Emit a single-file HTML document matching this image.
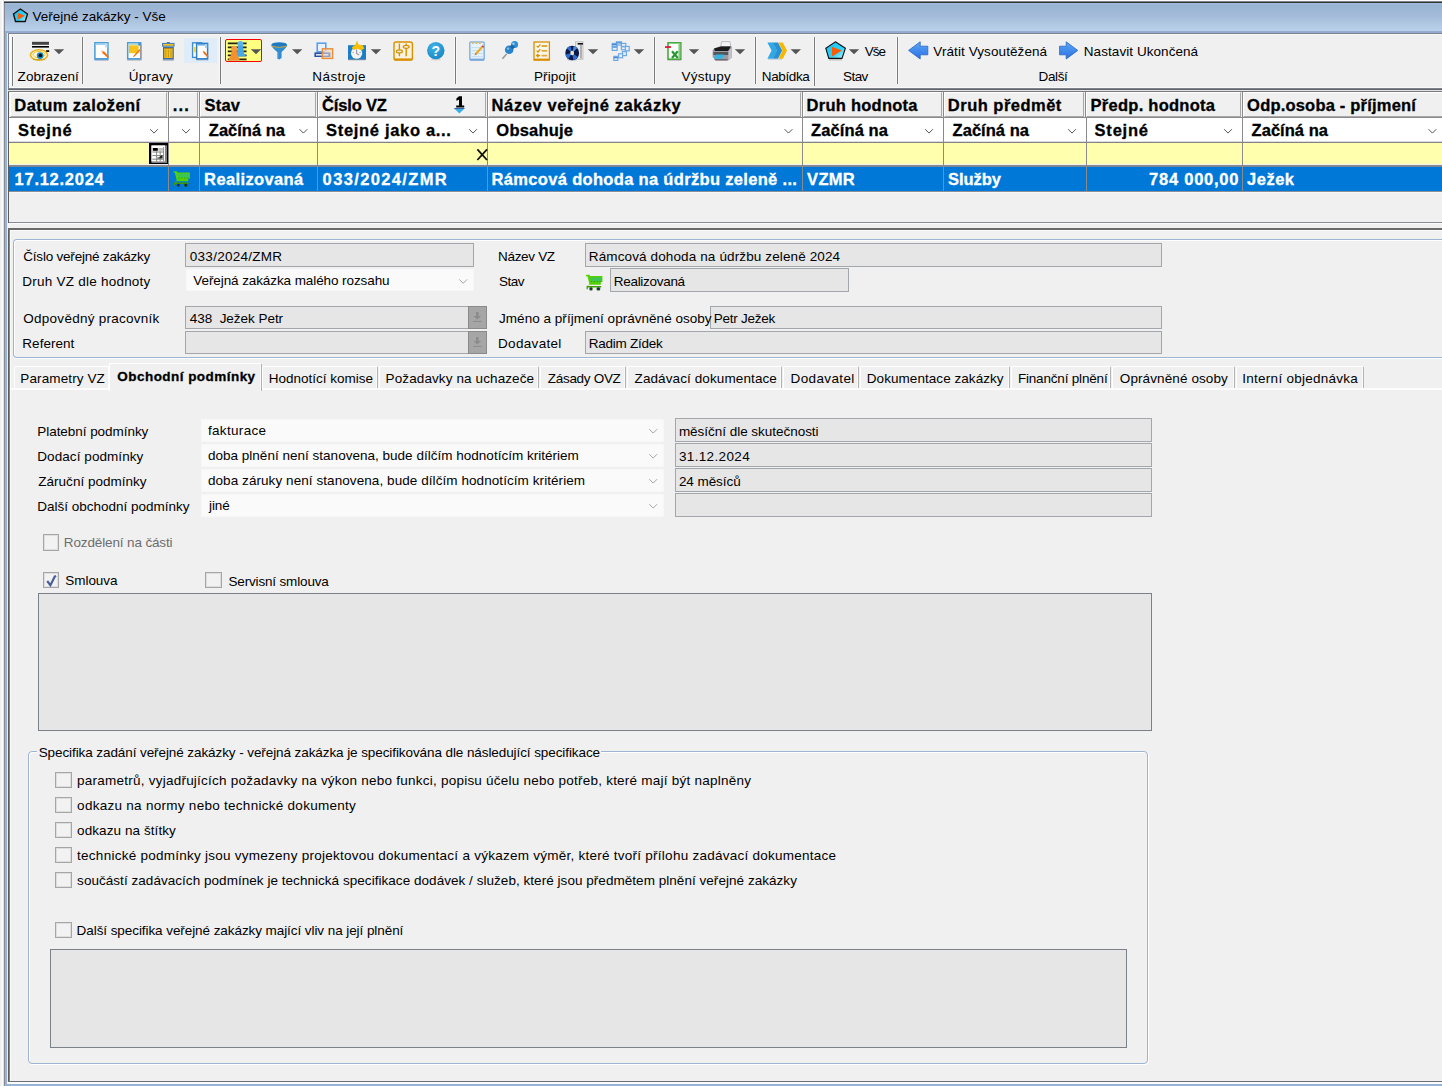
<!DOCTYPE html>
<html><head><meta charset="utf-8"><title>Veřejné zakázky - Vše</title>
<style>
html,body{margin:0;padding:0;overflow:hidden}
body{width:1442px;height:1086px;background:#f0f0f0;position:relative;overflow:hidden;font-family:"Liberation Sans",sans-serif;font-size:13px;color:#000}
.a{position:absolute;box-sizing:border-box}
.t{position:absolute;white-space:pre;line-height:20px;height:20px}
.vs{position:absolute;width:1px;background:#7a7a7a;top:37px;height:47px;box-shadow:-1px 0 0 #f8f8f8,1px 0 0 #f8f8f8}
.hd{position:absolute;top:92px;height:25px;box-sizing:border-box;background:#f0f0f0;border-left:1px solid #fff;border-top:1px solid #fff;border-right:1px solid #a8a8a8;border-bottom:1px solid #a8a8a8}
.gs{position:absolute;top:92px;height:100px;width:1px;background:#8a8a8a}
.fc{position:absolute;top:118px;height:24px;background:#fff}
.fld{position:absolute;box-sizing:border-box;background:#e6e6e6;border:1px solid #a3a6ab}
.cmb{position:absolute;box-sizing:border-box;background:#fafafa;border:1px solid #f7f7f7}
.cb{position:absolute;box-sizing:border-box;width:17px;height:16px;background:#f2f2f2;border:1px solid #a6a6a6;box-shadow:inset 0 0 0 1px #dedede}
.tab{position:absolute;top:366px;height:22px;box-sizing:border-box;background:#f0f0f0;border-left:1px solid #fff;border-top:1px solid #fff;border-right:1px solid #b4b4b4;box-shadow:inset -1px 0 0 #fafafa;border-radius:2px 2px 0 0}
svg{position:absolute;overflow:visible}
</style></head><body>

<!-- window frame -->
<div class="a" style="left:0;top:0;width:1442px;height:1px;background:#fafafa"></div>
<div class="a" style="left:1px;top:0;width:1px;height:1086px;background:#f5f5f5"></div>
<div class="a" style="left:2px;top:0;width:1px;height:1086px;background:#fcfcfc"></div>
<div class="a" style="left:3px;top:0;width:1px;height:1086px;background:#e0e0e0"></div>
<div class="a" style="left:4px;top:1px;width:1px;height:1085px;background:#868b95"></div>
<div class="a" style="left:5px;top:1px;width:2px;height:1085px;background:#98b4d4"></div>
<div class="a" style="left:7px;top:31px;width:1px;height:1053px;background:#ececec"></div>
<!-- title bar -->
<div class="a" style="left:4px;top:1px;width:1438px;height:1px;background:#7d828b"></div>
<div class="a" style="left:4px;top:2px;width:1438px;height:1px;background:#333"></div>
<div class="a" style="left:5px;top:3px;width:1437px;height:29px;background:linear-gradient(#a0bedd,#99b3d3 2px,#a4bcd9 45%,#bdd3ec)"></div>
<div class="a" style="left:5px;top:31px;width:1437px;height:2px;background:#93add0"></div>
<!-- inner frame -->
<div class="a" style="left:8px;top:33px;width:1434px;height:1px;background:#7d828c"></div>
<div class="a" style="left:8px;top:33px;width:1px;height:58px;background:#7d828c"></div>
<div class="a" style="left:8px;top:91px;width:1px;height:991px;background:#5c5c5c"></div>
<div class="a" style="left:9px;top:91px;width:1px;height:990px;background:#7d828b"></div>
<div class="a" style="left:9px;top:34px;width:2px;height:54px;background:#fafafa"></div>
<div class="a" style="left:10px;top:34px;width:1px;height:1047px;background:#fbfbfb"></div>
<div class="a" style="left:9px;top:34px;width:1433px;height:1px;background:#f7f7f7"></div>
<!-- bottom frame -->
<div class="a" style="left:8px;top:1081px;width:1434px;height:1px;background:#6c7077"></div>
<div class="a" style="left:7px;top:1082px;width:1435px;height:2px;background:#fbfbfb"></div>
<div class="a" style="left:5px;top:1084px;width:1437px;height:2px;background:#98b4d4"></div>

<!-- toolbar bottom -->
<div class="a" style="left:9px;top:87px;width:1433px;height:1px;background:#fafafa"></div>
<div class="a" style="left:8px;top:88px;width:1434px;height:1px;background:#7d828c"></div>
<div class="a" style="left:8px;top:89px;width:1434px;height:1px;background:#62666c"></div>
<div class="a" style="left:8px;top:90px;width:1434px;height:1px;background:#e4e4e4"></div>
<!-- toolbar separators -->
<div class="vs" style="left:12px;height:49px"></div>
<div class="vs" style="left:82px"></div>
<div class="vs" style="left:220px"></div>
<div class="vs" style="left:455px"></div>
<div class="vs" style="left:654px"></div>
<div class="vs" style="left:755px"></div>
<div class="vs" style="left:814px;height:49px"></div>
<div class="vs" style="left:897px"></div>
<!-- highlighted buttons -->
<div class="a" style="left:184px;top:38px;width:33px;height:25px;background:#e0edf9"></div>
<div class="a" style="left:225px;top:39px;width:37px;height:23px;background:#ffff80;border:1px solid #f00;border-radius:2px"></div>

<svg width="1442" height="1086" viewBox="0 0 1442 1086" style="left:0;top:0;z-index:5">
<defs>
<path id="dd" d="M0 0h10.4l-5.2 5z" fill="#555"/>
<g id="chev"><path d="M0.1 0.4l3.9 3.9 3.9-3.9" fill="none" stroke="#555" stroke-width="1"/></g>
<g id="chevl"><path d="M0.1 0.4l3.9 3.9 3.9-3.9" fill="none" stroke="#a4a4a4" stroke-width="1"/></g>
<g id="cart">
<path d="M0.3 0.8q0.2-1 1.3-1h2.3l0.9 1.2h12.2v6l-1.6 0.2v2.6h-11.2l-2.2-8.6h-1.6z" fill="#52d205"/>
<path d="M5 2.4h11.5v4h-11z" fill="#3cc455"/>
<path d="M5.6 6.6h10.4" stroke="#3a9a10" stroke-width="1" stroke-dasharray="1.2 1.6"/>
<path d="M4.2 9.4l-2.6 2v0.4" stroke="#52d205" stroke-width="1" fill="none" stroke-dasharray="1 0.8"/>
<path d="M1.2 11h14.6v1.6h-13.4v1.6h-1.2z" fill="#3f9a04"/>
<rect x="4" y="12.4" width="3.2" height="3" rx="1" fill="#2a5a10"/><rect x="4.9" y="12.6" width="1.5" height="2" fill="#0a2060"/>
<rect x="11.2" y="12.4" width="3.6" height="3" rx="1" fill="#2a5a10"/><rect x="12.1" y="12.6" width="1.8" height="2" fill="#0a2060"/>
</g>
<linearGradient id="gb" x1="0" y1="0" x2="0" y2="1"><stop offset="0" stop-color="#5aa8f8"/><stop offset="1" stop-color="#2a6fe0"/></linearGradient>
<radialGradient id="gh" cx="0.4" cy="0.3" r="0.8"><stop offset="0" stop-color="#3fb4e8"/><stop offset="1" stop-color="#1583c4"/></radialGradient>
<linearGradient id="gp" x1="0" y1="0" x2="1" y2="1"><stop offset="0" stop-color="#10c0f8"/><stop offset="0.6" stop-color="#30d0f8"/><stop offset="1" stop-color="#c8f4fc"/></linearGradient>
</defs>

<!-- title icon pentagon -->
<g transform="translate(13.2,8.7) scale(0.73)">
<path d="M9.8 0.4L19.6 7.2 16.4 17.6H3.2L0.4 7.2z" fill="url(#gp)" stroke="#111" stroke-width="1.9"/>
<path d="M6.2 5.6v9.6l9.6-5.6z" fill="#ff5a00"/>
</g>

<!-- 1 eye/view -->
<rect x="32" y="41.8" width="17" height="3" fill="#444"/><rect x="32" y="46" width="17" height="1.6" fill="#000"/>
<rect x="46" y="50.2" width="3.2" height="1.8" fill="#111"/>
<ellipse cx="39" cy="55" rx="8.6" ry="5.2" fill="#fff6d8" stroke="#e8b418" stroke-width="1.6"/>
<ellipse cx="39" cy="54.6" rx="6" ry="3.2" fill="none" stroke="#f0c840" stroke-width="1"/>
<circle cx="40.2" cy="55.6" r="3.4" fill="#1a90c8"/><circle cx="40.4" cy="55.4" r="1.9" fill="#061018"/>
<path d="M33 59.6h12" stroke="#c8a030" stroke-width="1"/>
<use href="#dd" x="53.8" y="49.2"/>

<!-- 2 new doc -->
<rect x="94.4" y="59" width="14" height="1.6" fill="#8ea6c8"/>
<rect x="94.9" y="42.8" width="13" height="16" fill="#fff" stroke="#469bd8" stroke-width="1.5"/>
<rect x="95.6" y="43.4" width="11.6" height="1.6" fill="#9fd0f0"/><rect x="105" y="43.4" width="2.4" height="4" fill="#bfe0f6"/>
<path d="M101.4 50.4l1.2 2.8 5.6 5 0.6-1.6-4.6-5z" fill="#f07018"/><path d="M101.2 50.2l2.6 1-1.4 1.4z" fill="#f8c070"/>

<!-- 3 edit doc -->
<rect x="127.2" y="59" width="14.4" height="1.6" fill="#aab4c4"/>
<rect x="127.7" y="42.8" width="13" height="16" fill="#fff" stroke="#469bd8" stroke-width="1.5"/>
<rect x="140" y="44.4" width="1.6" height="14.4" fill="#9a9a9a"/>
<rect x="128.6" y="43.6" width="10" height="1.6" fill="#b4d8c4"/><rect x="138.2" y="43.2" width="2.2" height="2.4" fill="#2a90e0"/>
<rect x="129" y="45.4" width="9.6" height="7.8" fill="#f8c21c"/>
<path d="M139.4 49l-5.6 6.4-1 1.6 1.8-0.4 5.6-6z" fill="#f07018"/>

<!-- 4 trash -->
<rect x="162.8" y="59" width="11" height="1.6" fill="#98a4b8"/>
<rect x="166.8" y="42" width="3" height="1.6" fill="#3a78b8"/>
<rect x="162.6" y="43.4" width="11.4" height="2.8" fill="#f8c21c" stroke="#3a78b8" stroke-width="1"/>
<rect x="163.6" y="47.6" width="9.6" height="11" fill="#f8c21c" stroke="#3a6ea8" stroke-width="1.2"/>
<path d="M165.8 49.6v8M168.4 49.6v8M171 49.6v8" stroke="#d09c10" stroke-width="1.2"/>
<path d="M164 48.4h9" stroke="#b08820" stroke-width="1"/>

<!-- 5 copy doc -->
<rect x="192.6" y="42.8" width="9" height="14.6" fill="#fff" stroke="#3f8fd0" stroke-width="1.4"/>
<rect x="193.8" y="47" width="1.8" height="5.4" fill="#f8d040"/>
<rect x="196.2" y="59" width="12" height="1.4" fill="#9ab0cc"/>
<rect x="196.6" y="43.4" width="11" height="15.4" fill="#fff" stroke="#2f80c8" stroke-width="1.5"/>
<rect x="197.4" y="44" width="9.6" height="1.6" fill="#6ab0e8"/><rect x="205" y="44" width="2.2" height="4" fill="#a8d4f4"/>
<path d="M202.6 50.8l1.2 2.6 4 4.4 0.8-1.6-3.6-4.4z" fill="#f07018"/>

<!-- 6 people on yellow -->
<path d="M227.8 43.4h18.8M227.8 47.4h18.8M227.8 51.4h18.8M227.8 55.4h18.8M227.8 59.4h18.8" stroke="#26260a" stroke-width="1.9"/>
<circle cx="240.4" cy="44" r="3" fill="#5cb6ec"/><path d="M238 45.6h4.8l1.2 7.8 1.6 1.4v1.6h-10.4v-1.6l1.6-1.4z" fill="#48a8e4"/>
<circle cx="234.2" cy="48.8" r="3" fill="#f89a3c"/><path d="M231.8 50.4h4.8l1.4 6.4 1.6 1.4v2h-10.8v-2l1.6-1.4z" fill="#f59030"/>
<use href="#dd" x="250.8" y="49.2"/>

<!-- 7 funnel -->
<path d="M271.2 45.2q0-3 8-3t8 3q0 1.6-5.6 6.8v6l-2.4 1.6-2-1v-6.6q-6-5.2-6-6.8z" fill="#2f8ed0"/>
<ellipse cx="279.2" cy="44.6" rx="7.2" ry="1.8" fill="#1f78c0"/>
<path d="M271.8 46.4q7.4 2 14.8 0" stroke="#c8a040" stroke-width="1" fill="none"/>
<path d="M277.6 52v6.6" stroke="#6ab8ec" stroke-width="1.2"/>
<use href="#dd" x="292" y="49.2"/>

<!-- 8 windows -->
<rect x="317.2" y="43.2" width="8.6" height="8.6" fill="#e8f0fc" stroke="#5aa0ec" stroke-width="1.6"/>
<rect x="314.4" y="52.4" width="16" height="4.6" fill="#2850a8"/><rect x="316" y="54" width="12.4" height="1.6" fill="#dfe8f8"/>
<rect x="322.4" y="48.8" width="10.2" height="9.6" fill="#f0e0d0" fill-opacity="0.55" stroke="#e89040" stroke-width="1.5"/>
<rect x="324.6" y="50.8" width="6" height="1.4" fill="#f4d8b8"/>

<!-- 9 clock star -->
<rect x="348" y="45.2" width="18" height="14.6" fill="#1a7fc8"/><rect x="348" y="59" width="17" height="1.2" fill="#6a8aa8"/>
<circle cx="356.6" cy="53.2" r="5.6" fill="#f4f4f4"/><path d="M356.6 49.6v3.8l2.6 1.6" stroke="#99a" stroke-width="1.2" fill="none"/><path d="M352.6 52.4h1.4M359.4 52.4h1.4" stroke="#aab" stroke-width="1"/>
<path d="M357.2 40.6l1.2 4 4.2 0.6 1.8 3.4-3.2 1.6-3.6-1.4-4.4 1.2-1.4-2.6 3.2-2.4z" fill="#f8c000"/>
<use href="#dd" x="370.8" y="49.2"/>

<!-- 10 sliders -->
<rect x="394" y="42" width="18.4" height="18" rx="2" fill="#fbf3e0" stroke="#d89000" stroke-width="1.4"/>
<path d="M394 59.4h18.4" stroke="#d89000" stroke-width="2"/>
<path d="M399.4 43.6v12.6M406.2 43.6v12.6" stroke="#d89000" stroke-width="1.4"/>
<ellipse cx="399.4" cy="51.4" rx="3" ry="1.5" fill="#fdf3dc" stroke="#d89000" stroke-width="1.2"/>
<ellipse cx="406.2" cy="46.8" rx="3" ry="1.5" fill="#fdf3dc" stroke="#d89000" stroke-width="1.2"/>

<!-- 11 help -->
<ellipse cx="435.8" cy="59.6" rx="5" ry="0.9" fill="#d0d0d0"/>
<circle cx="435.8" cy="50.6" r="8.7" fill="url(#gh)"/>
<text x="435.9" y="55.6" font-family="Liberation Sans" font-weight="bold" font-size="14" fill="#fff" text-anchor="middle">?</text>

<!-- 12 note -->
<rect x="469.8" y="42" width="14.4" height="18" rx="1" fill="#e6f2fc" stroke="#86b4e0" stroke-width="1.5"/>
<rect x="470" y="58.6" width="14" height="2" fill="#78a8d8"/>
<path d="M472 43h10" stroke="#d8c070" stroke-width="2" stroke-dasharray="2 1.4"/>
<path d="M471.6 47.6h11M471.6 50.6h11M471.6 53.6h11M471.6 56.6h11" stroke="#c4dcf2" stroke-width="1"/>
<path d="M483 47.6l-1.6-1.4-6 6.6-0.8 2.4 2.4-1z" fill="#f4a818"/><path d="M483.2 47.8l-1.8-1.6 1-1 1.8 1.6z" fill="#d83820"/><path d="M474.6 55.2l0.8-2.4 1.6 1.4z" fill="#888"/>

<!-- 13 pin -->
<path d="M506.6 54l-4.2 4.8" stroke="#9a9a9a" stroke-width="1.6"/>
<circle cx="509.2" cy="49.8" r="4.3" fill="#2a84cc"/><circle cx="514.6" cy="44.6" r="3.5" fill="#2f8ed4"/>
<path d="M509.6 46.6l2.4-2.4 3 3-2.4 2.4z" fill="#1c66a8"/>
<circle cx="513.4" cy="43.8" r="1.3" fill="#8accf4"/><circle cx="508" cy="48.6" r="1.2" fill="#7cc0ee"/>

<!-- 14 checklist -->
<rect x="534" y="42" width="15.4" height="18" fill="#fbf6ea" stroke="#d89000" stroke-width="1.3"/>
<path d="M534 59.6h15.4" stroke="#d89000" stroke-width="2"/>
<path d="M541.6 46h5.6M541.6 50.8h5.6M541.6 55.6h5.6" stroke="#e0aa40" stroke-width="1.8"/>
<path d="M536.6 45.8l1.4 1.4 2.4-2.8M536.6 50.6l1.4 1.4 2.4-2.8" stroke="#d89000" stroke-width="1.2" fill="none"/>
<path d="M540.2 55.6h-3.4M538.4 54l-1.8 1.6 1.8 1.6" stroke="#d89000" stroke-width="1.2" fill="none"/>

<!-- 15 CD + drive -->
<rect x="575.6" y="41.8" width="7.4" height="17.4" fill="#e8e8e8" stroke="#b8b8b8" stroke-width="0.8"/>
<rect x="577.6" y="43" width="5.4" height="1.6" fill="#111"/><rect x="580" y="45" width="2" height="13.6" fill="#b0b0b0"/>
<ellipse cx="572.2" cy="59.8" rx="5" ry="0.9" fill="#b8c0d0"/>
<ellipse cx="572.2" cy="53" rx="6.9" ry="7.3" fill="#0c1848"/>
<path d="M572.2 53l-5.4-4.4a7 7 0 0 1 3.6-2.6zM572.2 53l5.6 4a7 7 0 0 1-4.4 3zM572.2 53l-6.6 1.6a7 7 0 0 0 2.6 4.4z" fill="#2a6fd0"/>
<path d="M572.2 53l1.6-7a7 7 0 0 1 3.6 2z" fill="#4a8ae0"/>
<ellipse cx="572.2" cy="53" rx="1.9" ry="2.2" fill="#ece4c4"/>
<use href="#dd" x="587.8" y="49.2"/>

<!-- 16 flow -->
<g fill="#e6f0fb" stroke="#6ea8e6" stroke-width="1.2">
<rect x="612.2" y="43.4" width="5" height="3"/><rect x="612.2" y="47.4" width="5" height="3"/>
<rect x="616.4" y="41.8" width="5" height="3.2"/>
<rect x="621.4" y="43.4" width="4.4" height="3"/><rect x="621.4" y="46.8" width="4.4" height="3"/>
<rect x="625.4" y="46.4" width="3.8" height="4.4"/>
<rect x="622.4" y="51.6" width="4" height="4"/>
<rect x="618.6" y="53.8" width="4" height="4"/>
<rect x="613.8" y="56.4" width="4" height="4"/>
</g>
<path d="M612.2 44.6h5M616.4 42.8h5M613.8 57.6h4" stroke="#4a86d0" stroke-width="1.2"/>
<use href="#dd" x="633.8" y="49.2"/>

<!-- 17 excel -->
<rect x="667.6" y="59.2" width="13.6" height="1.4" fill="#b0b4b0"/>
<rect x="668" y="42.8" width="12.8" height="16.4" fill="#fff" stroke="#4aa840" stroke-width="1.6"/>
<rect x="678.4" y="43.4" width="2" height="15" fill="#8cc888"/>
<rect x="665" y="46.2" width="6" height="1.7" fill="#e01030"/>
<path d="M672 51.2l5.8 6.8M677.8 51.2l-5.8 6.8" stroke="#279a30" stroke-width="2.2"/>
<use href="#dd" x="688.8" y="49.2"/>

<!-- 18 printer -->
<path d="M721.6 41.6h8.4l1 6h-10.4z" fill="#f4f4f4" stroke="#b0b0b8" stroke-width="0.8"/>
<path d="M714 48.4l7-2.4h10l0.8 1.6v10l-3.2 2.6h-13l-3-3.2v-6.4z" fill="#9c9ca4"/>
<path d="M714 48.6l7-2.2h9.8l-2.6 4.6h-13.4z" fill="#1c1c1c"/>
<path d="M728.4 51l3.2-3v9.6l-3.2 2.6z" fill="#c4c4c8"/>
<path d="M713.4 52h14.8v3h-14.8z" fill="#55555c"/>
<path d="M716 54.4h8.4l-2.4 4.4h-8.2z" fill="#30b4e4"/>
<path d="M714 59.2h13.6v1.4h-12z" fill="#5c5c64"/>
<use href="#dd" x="734.8" y="49.2"/>

<!-- 19 chevrons -->
<path d="M767.4 42.4h5.6l4.2 8.2-4.2 8.2h-5.6l4.2-8.2z" fill="#30a8e4"/>
<path d="M772.8 42.4h5.2l4.2 8.2-4.2 8.2h-5.2l4.2-8.2z" fill="#2890d4"/>
<path d="M778.4 42.4h4.4l4.2 8.2-4.2 8.2h-4.4l4.2-8.2z" fill="#f8b800"/>
<path d="M768 59.4h14" stroke="#c8d0dc" stroke-width="1"/>
<use href="#dd" x="790.6" y="49.2"/>

<!-- 20 pentagon -->
<path d="M829 59.8h13" stroke="#b8b8b8" stroke-width="1.2"/>
<path d="M835.4 41.8L845.4 48.2 842 58.4H828.8L825.8 48.2z" fill="url(#gp)" stroke="#111" stroke-width="1.1"/>
<path d="M832 46.8v9.6l9.8-5.8z" fill="#ff5a00"/>
<use href="#dd" x="848.8" y="49.2"/>

<!-- 21 arrows -->
<path d="M908.6 50.4l11.6-8.6v4.4h7.6v8.6h-7.6v4.2z" fill="url(#gb)" stroke="#2a64c8" stroke-width="0.8"/>
<path d="M1077.8 50.4l-11.6-8.6v4.4h-6.6v8.6h6.6v4.2z" fill="url(#gb)" stroke="#2a64c8" stroke-width="0.8"/>

<!-- grid icons -->
<use href="#chev" x="150" y="128.8"/><use href="#chev" x="182" y="128.8"/><use href="#chev" x="299.4" y="128.8"/>
<use href="#chev" x="469" y="128.8"/><use href="#chev" x="784.5" y="128.8"/><use href="#chev" x="925" y="128.8"/>
<use href="#chev" x="1068" y="128.8"/><use href="#chev" x="1224" y="128.8"/><use href="#chev" x="1428.4" y="128.8"/>
<!-- sort indicator -->
<path d="M459 96.2h3v9.2h2.2v2.2h-8v-2.2h2.8v-5.6l-2.6 1v-2.2z" fill="#000"/>
<path d="M454 108.2h10.8l-5.4 5.4z" fill="#3aace8"/><path d="M454 108.2h10.8l-0.8 0.9h-8l-1 0.2z" fill="#1a4a90"/>
<!-- calendar -->
<rect x="149" y="143" width="19" height="21" fill="#000"/>
<rect x="151.4" y="145.4" width="15.6" height="17.6" fill="#808080"/>
<rect x="151.4" y="145.4" width="13.6" height="16" fill="#fff"/>
<rect x="152.8" y="148" width="5" height="2.8" fill="#000"/><rect x="158.4" y="148" width="4.6" height="2.8" fill="#c0c0c0"/>
<path d="M152.4 152h11.4M152.4 155.6h11.4M152.4 159.2h11.4" stroke="#808080" stroke-width="1"/>
<path d="M156.6 151.4v10M160.2 151.4v10M163.6 147v14.4" stroke="#808080" stroke-width="0.9"/>
<path d="M157.4 157.6l2-0.2 1.4-2 1.8 0.2v3h-5.2z" fill="#222"/>
<!-- X -->
<path d="M477.4 149.4l9.6 10.6M487 149.4l-9.6 10.6" stroke="#111" stroke-width="1.8"/>
<!-- carts -->
<use href="#cart" x="172.8" y="171.4"/>
<use href="#cart" x="585.4" y="275"/>
<!-- combo chevrons -->
<use href="#chevl" x="459.2" y="279"/>
<use href="#chevl" x="649.2" y="428.8"/><use href="#chevl" x="649.2" y="453.8"/><use href="#chevl" x="649.2" y="478.8"/><use href="#chevl" x="649.2" y="503.8"/>
<!-- lookup arrow buttons -->
<g id="lk"><path d="M476 312h2.6v4h2.6l-3.9 3.6-3.9-3.6h2.6z" fill="#8c8c8c"/><path d="M473 321.4h8.6" stroke="#8c8c8c" stroke-width="1"/></g>
<use href="#lk" y="25"/>
<!-- check -->
<path d="M47.2 581l3.2 4.2 4.4-8.6 1.2-0.8" fill="none" stroke="#4a5f9a" stroke-width="2.2"/>
</svg>


<!-- grid -->
<div class="a" style="left:8px;top:91px;width:1434px;height:1px;background:#7a7a7a"></div>
<div class="a" style="left:9px;top:92px;width:1433px;height:130px;background:#f0f0f0"></div>
<div class="hd" style="left:10px;width:157px"></div>
<div class="hd" style="left:169px;width:29px"></div>
<div class="hd" style="left:200px;width:116px"></div>
<div class="hd" style="left:318px;width:168px"></div>
<div class="hd" style="left:488px;width:313px"></div>
<div class="hd" style="left:803px;width:139px"></div>
<div class="hd" style="left:944px;width:140px"></div>
<div class="hd" style="left:1086px;width:155px"></div>
<div class="hd" style="left:1243px;width:199px;border-right:0"></div>
<!-- filter row -->
<div class="a" style="left:9px;top:117px;width:1433px;height:1px;background:#8a8a8a"></div>
<div class="a" style="left:9px;top:118px;width:1433px;height:24px;background:#fff"></div>
<div class="a" style="left:9px;top:141px;width:1433px;height:1px;background:#dcdcde"></div>
<div class="a" style="left:9px;top:142px;width:1433px;height:1px;background:#828389"></div>
<!-- yellow row -->
<div class="a" style="left:9px;top:143px;width:1433px;height:21px;background:#ffffae"></div>
<div class="a" style="left:9px;top:164px;width:1433px;height:1px;background:#f3f3ee"></div>
<div class="a" style="left:9px;top:165px;width:1433px;height:1px;background:#8a8a90"></div>
<div class="a" style="left:9px;top:166px;width:1433px;height:1px;background:#7a8796"></div>
<!-- selected row -->
<div class="a" style="left:9px;top:167px;width:1433px;height:24px;background:#0078d7"></div>
<div class="a" style="left:9px;top:191px;width:1433px;height:1px;background:#8c9096"></div>
<div class="a" style="left:9px;top:192px;width:1433px;height:1px;background:#f8f8f8"></div>
<!-- col separators -->
<div class="gs" style="left:168px"></div>
<div class="gs" style="left:199px"></div>
<div class="gs" style="left:317px"></div>
<div class="gs" style="left:487px"></div>
<div class="gs" style="left:802px"></div>
<div class="gs" style="left:943px"></div>
<div class="gs" style="left:1085px;height:25px"></div><div class="gs" style="left:1086px;top:117px;height:74px"></div>
<div class="gs" style="left:1242px"></div>
<!-- grid bottom -->
<div class="a" style="left:9px;top:222px;width:1433px;height:1px;background:#858a94"></div>
<div class="a" style="left:9px;top:223px;width:1433px;height:1px;background:#fbfbfb"></div>
<!-- splitter / panel top -->
<div class="a" style="left:8px;top:223px;width:3px;height:5px;background:#f4f4f4"></div>
<div class="a" style="left:8px;top:228px;width:1434px;height:2px;background:#6a6a6a"></div>
<div class="a" style="left:10px;top:230px;width:1432px;height:1px;background:#fbfbfb"></div>

<!-- header group box -->
<div class="a" style="left:13px;top:239px;width:1429px;height:119px;border:1px solid #9db5d3;border-right:0;border-radius:4px 0 0 4px;box-shadow:inset 1px 1px 0 #fff, 0 1px 0 #fff"></div>
<div class="fld" style="left:185px;top:243px;width:289px;height:24px"></div>
<div class="cmb" style="left:186px;top:269px;width:288px;height:22px"></div>
<div class="fld" style="left:185px;top:306px;width:284px;height:23px"></div>
<div class="fld" style="left:185px;top:331px;width:284px;height:23px"></div>
<div class="a" style="left:468px;top:306px;width:19px;height:23px;background:#a6a6a6;border:1px solid #8a8a8a"></div>
<div class="a" style="left:468px;top:331px;width:19px;height:23px;background:#a6a6a6;border:1px solid #8a8a8a"></div>
<div class="fld" style="left:585px;top:243px;width:577px;height:24px"></div>
<div class="fld" style="left:610px;top:268px;width:239px;height:24px"></div>
<div class="fld" style="left:710px;top:306px;width:452px;height:23px"></div>
<div class="fld" style="left:585px;top:331px;width:577px;height:23px"></div>

<!-- tabs -->
<div class="a" style="left:10px;top:388px;width:1432px;height:2px;background:#fdfdfd"></div>
<div class="tab" style="left:14px;width:95px;border-right:1px solid #fff;box-shadow:none"></div>
<div class="tab" style="left:262px;width:116px"></div>
<div class="tab" style="left:379px;width:160px"></div>
<div class="tab" style="left:540px;width:86px"></div>
<div class="tab" style="left:627px;width:155px"></div>
<div class="tab" style="left:783px;width:76px"></div>
<div class="tab" style="left:860px;width:150px"></div>
<div class="tab" style="left:1011px;width:100px"></div>
<div class="tab" style="left:1112px;width:123px"></div>
<div class="tab" style="left:1236px;width:128px"></div>
<div class="tab" style="left:109px;top:363px;width:153px;height:28px;background:#f0f0f0;border-right:1px solid #b0b0b0;box-shadow:inset -1px 0 0 #fafafa"></div>

<!-- tab content -->
<div class="cmb" style="left:201px;top:419px;width:463px;height:23px"></div>
<div class="cmb" style="left:201px;top:444px;width:463px;height:23px"></div>
<div class="cmb" style="left:201px;top:469px;width:463px;height:23px"></div>
<div class="cmb" style="left:201px;top:494px;width:463px;height:23px"></div>
<div class="fld" style="left:675px;top:418px;width:477px;height:24px"></div>
<div class="fld" style="left:675px;top:443px;width:477px;height:24px"></div>
<div class="fld" style="left:675px;top:468px;width:477px;height:24px"></div>
<div class="fld" style="left:675px;top:493px;width:477px;height:24px"></div>
<div class="cb" style="left:43px;top:534px;width:16px;height:17px"></div>
<div class="cb" style="left:43px;top:572px;width:16px"></div>
<div class="cb" style="left:205px;top:572px"></div>
<div class="fld" style="left:38px;top:593px;width:1114px;height:138px;border-color:#7c8088"></div>

<!-- spec group -->
<div class="a" style="left:28px;top:751px;width:1120px;height:313px;border:1px solid #9db5d3;border-radius:4px;box-shadow:inset 1px 1px 0 #fff, 1px 1px 0 #fff"></div>
<div class="a" style="left:37px;top:747px;width:564px;height:10px;background:#f0f0f0"></div>
<div class="cb" style="left:55px;top:772px"></div>
<div class="cb" style="left:55px;top:797px"></div>
<div class="cb" style="left:55px;top:822px"></div>
<div class="cb" style="left:55px;top:847px"></div>
<div class="cb" style="left:55px;top:872px"></div>
<div class="cb" style="left:55px;top:922px"></div>
<div class="fld" style="left:50px;top:949px;width:1077px;height:99px;border-color:#7c8088"></div>

<span class="t" style="left:32.60px;top:7.00px;font-size:13.5px;letter-spacing:-0.023px;">Veřejné zakázky - Vše</span>
<span class="t" style="left:17.60px;top:67.00px;font-size:13.5px;letter-spacing:0.046px;">Zobrazení</span>
<span class="t" style="left:128.70px;top:67.00px;font-size:13.5px;letter-spacing:0.278px;">Úpravy</span>
<span class="t" style="left:312.30px;top:67.00px;font-size:13.5px;letter-spacing:0.420px;">Nástroje</span>
<span class="t" style="left:534.05px;top:67.00px;font-size:13.5px;letter-spacing:0.062px;">Připojit</span>
<span class="t" style="left:681.55px;top:67.00px;font-size:13.5px;letter-spacing:0.196px;">Výstupy</span>
<span class="t" style="left:761.80px;top:67.00px;font-size:13.5px;letter-spacing:-0.371px;">Nabídka</span>
<span class="t" style="left:843.05px;top:67.00px;font-size:13.5px;letter-spacing:-0.571px;">Stav</span>
<span class="t" style="left:1038.55px;top:67.00px;font-size:13.5px;letter-spacing:-0.364px;">Další</span>
<span class="t" style="left:864.70px;top:42.00px;font-size:13.5px;letter-spacing:-0.927px;">Vše</span>
<span class="t" style="left:933.30px;top:42.00px;font-size:13.5px;letter-spacing:0.088px;">Vrátit Vysoutěžená</span>
<span class="t" style="left:1083.80px;top:42.00px;font-size:13.5px;letter-spacing:0.063px;">Nastavit Ukončená</span>
<span class="t" style="left:14.30px;top:95.00px;font-size:16.5px;letter-spacing:0.441px;font-weight:bold;-webkit-text-stroke:0.3px;">Datum založení</span>
<span class="t" style="left:172.85px;top:95.00px;font-size:16.5px;letter-spacing:1.141px;font-weight:bold;-webkit-text-stroke:0.3px;">...</span>
<span class="t" style="left:204.60px;top:95.00px;font-size:16.5px;letter-spacing:0.174px;font-weight:bold;-webkit-text-stroke:0.3px;">Stav</span>
<span class="t" style="left:322.10px;top:95.00px;font-size:16.5px;letter-spacing:-0.176px;font-weight:bold;-webkit-text-stroke:0.3px;">Číslo VZ</span>
<span class="t" style="left:491.60px;top:95.00px;font-size:16.5px;letter-spacing:0.604px;font-weight:bold;-webkit-text-stroke:0.3px;">Název veřejné zakázky</span>
<span class="t" style="left:806.60px;top:95.00px;font-size:16.5px;letter-spacing:0.248px;font-weight:bold;-webkit-text-stroke:0.3px;">Druh hodnota</span>
<span class="t" style="left:947.85px;top:95.00px;font-size:16.5px;letter-spacing:0.479px;font-weight:bold;-webkit-text-stroke:0.3px;">Druh předmět</span>
<span class="t" style="left:1090.60px;top:95.00px;font-size:16.5px;letter-spacing:0.260px;font-weight:bold;-webkit-text-stroke:0.3px;">Předp. hodnota</span>
<span class="t" style="left:1247.10px;top:95.00px;font-size:16.5px;letter-spacing:0.199px;font-weight:bold;-webkit-text-stroke:0.3px;">Odp.osoba - příjmení</span>
<span class="t" style="left:18.10px;top:120.00px;font-size:16.5px;letter-spacing:0.822px;font-weight:bold;-webkit-text-stroke:0.3px;">Stejné</span>
<span class="t" style="left:208.85px;top:120.00px;font-size:16.5px;letter-spacing:0.002px;font-weight:bold;-webkit-text-stroke:0.3px;">Začíná na</span>
<span class="t" style="left:326.10px;top:120.00px;font-size:16.5px;letter-spacing:0.677px;font-weight:bold;-webkit-text-stroke:0.3px;">Stejné jako a...</span>
<span class="t" style="left:496.35px;top:120.00px;font-size:16.5px;letter-spacing:0.206px;font-weight:bold;-webkit-text-stroke:0.3px;">Obsahuje</span>
<span class="t" style="left:811.10px;top:120.00px;font-size:16.5px;letter-spacing:0.096px;font-weight:bold;-webkit-text-stroke:0.3px;">Začíná na</span>
<span class="t" style="left:952.60px;top:120.00px;font-size:16.5px;letter-spacing:0.033px;font-weight:bold;-webkit-text-stroke:0.3px;">Začíná na</span>
<span class="t" style="left:1094.60px;top:120.00px;font-size:16.5px;letter-spacing:0.772px;font-weight:bold;-webkit-text-stroke:0.3px;">Stejné</span>
<span class="t" style="left:1251.60px;top:120.00px;font-size:16.5px;letter-spacing:0.033px;font-weight:bold;-webkit-text-stroke:0.3px;">Začíná na</span>
<span class="t" style="left:14.60px;top:169.00px;font-size:16.5px;letter-spacing:0.727px;font-weight:bold;-webkit-text-stroke:0.3px;color:#fff;">17.12.2024</span>
<span class="t" style="left:204.10px;top:169.00px;font-size:16.5px;letter-spacing:0.375px;font-weight:bold;-webkit-text-stroke:0.3px;color:#fff;">Realizovaná</span>
<span class="t" style="left:322.60px;top:169.00px;font-size:16.5px;letter-spacing:1.361px;font-weight:bold;-webkit-text-stroke:0.3px;color:#fff;">033/2024/ZMR</span>
<span class="t" style="left:491.60px;top:169.00px;font-size:16.5px;letter-spacing:0.323px;font-weight:bold;-webkit-text-stroke:0.3px;color:#fff;">Rámcová dohoda na údržbu zeleně ...</span>
<span class="t" style="left:807.10px;top:169.00px;font-size:16.5px;letter-spacing:0.290px;font-weight:bold;-webkit-text-stroke:0.3px;color:#fff;">VZMR</span>
<span class="t" style="left:948.10px;top:169.00px;font-size:16.5px;letter-spacing:-0.059px;font-weight:bold;-webkit-text-stroke:0.3px;color:#fff;">Služby</span>
<span class="t" style="left:1149.10px;top:169.00px;font-size:16.5px;letter-spacing:0.755px;font-weight:bold;-webkit-text-stroke:0.3px;color:#fff;">784 000,00</span>
<span class="t" style="left:1247.10px;top:169.00px;font-size:16.5px;letter-spacing:0.480px;font-weight:bold;-webkit-text-stroke:0.3px;color:#fff;">Ježek</span>
<span class="t" style="left:23.30px;top:247.00px;font-size:13.5px;letter-spacing:-0.213px;">Číslo veřejné zakázky</span>
<span class="t" style="left:22.30px;top:272.00px;font-size:13.5px;letter-spacing:0.235px;">Druh VZ dle hodnoty</span>
<span class="t" style="left:23.30px;top:309.00px;font-size:13.5px;letter-spacing:0.262px;">Odpovědný pracovník</span>
<span class="t" style="left:22.30px;top:334.00px;font-size:13.5px;letter-spacing:0.039px;">Referent</span>
<span class="t" style="left:189.80px;top:247.00px;font-size:13.5px;letter-spacing:0.273px;">033/2024/ZMR</span>
<span class="t" style="left:193.30px;top:271.00px;font-size:13.5px;letter-spacing:-0.088px;">Veřejná zakázka malého rozsahu</span>
<span class="t" style="left:189.80px;top:309.00px;font-size:13.5px;letter-spacing:-0.036px;">438  Ježek Petr</span>
<span class="t" style="left:498.05px;top:247.00px;font-size:13.5px;letter-spacing:-0.317px;">Název VZ</span>
<span class="t" style="left:499.05px;top:272.00px;font-size:13.5px;letter-spacing:-0.488px;">Stav</span>
<span class="t" style="left:499.05px;top:309.00px;font-size:13.5px;letter-spacing:0.030px;">Jméno a příjmení oprávněné osoby</span>
<span class="t" style="left:498.05px;top:334.00px;font-size:13.5px;letter-spacing:0.314px;">Dodavatel</span>
<span class="t" style="left:588.80px;top:247.00px;font-size:13.5px;letter-spacing:0.125px;">Rámcová dohoda na údržbu zeleně 2024</span>
<span class="t" style="left:613.80px;top:272.00px;font-size:13.5px;letter-spacing:-0.299px;">Realizovaná</span>
<span class="t" style="left:713.80px;top:309.00px;font-size:13.5px;letter-spacing:-0.247px;">Petr Ježek</span>
<span class="t" style="left:588.80px;top:334.00px;font-size:13.5px;letter-spacing:-0.247px;">Radim Zídek</span>
<span class="t" style="left:20.30px;top:369.00px;font-size:13.5px;letter-spacing:0.116px;">Parametry VZ</span>
<span class="t" style="left:117.30px;top:367.00px;font-size:13.5px;letter-spacing:0.457px;font-weight:bold;-webkit-text-stroke:0.3px;">Obchodní podmínky</span>
<span class="t" style="left:268.80px;top:369.00px;font-size:13.5px;letter-spacing:0.001px;">Hodnotící komise</span>
<span class="t" style="left:385.55px;top:369.00px;font-size:13.5px;letter-spacing:0.111px;">Požadavky na uchazeče</span>
<span class="t" style="left:547.80px;top:369.00px;font-size:13.5px;letter-spacing:-0.303px;">Zásady OVZ</span>
<span class="t" style="left:634.55px;top:369.00px;font-size:13.5px;letter-spacing:0.104px;">Zadávací dokumentace</span>
<span class="t" style="left:790.55px;top:369.00px;font-size:13.5px;letter-spacing:0.376px;">Dodavatel</span>
<span class="t" style="left:866.80px;top:369.00px;font-size:13.5px;letter-spacing:0.055px;">Dokumentace zakázky</span>
<span class="t" style="left:1017.90px;top:369.00px;font-size:13.5px;letter-spacing:-0.183px;">Finanční plnění</span>
<span class="t" style="left:1119.80px;top:369.00px;font-size:13.5px;letter-spacing:0.106px;">Oprávněné osoby</span>
<span class="t" style="left:1242.30px;top:369.00px;font-size:13.5px;letter-spacing:0.261px;">Interní objednávka</span>
<span class="t" style="left:37.30px;top:422.00px;font-size:13.5px;letter-spacing:-0.048px;">Platební podmínky</span>
<span class="t" style="left:37.30px;top:447.00px;font-size:13.5px;letter-spacing:0.071px;">Dodací podmínky</span>
<span class="t" style="left:38.30px;top:472.00px;font-size:13.5px;letter-spacing:0.017px;">Záruční podmínky</span>
<span class="t" style="left:37.30px;top:497.00px;font-size:13.5px;letter-spacing:-0.002px;">Další obchodní podmínky</span>
<span class="t" style="left:207.95px;top:421.00px;font-size:13.5px;letter-spacing:0.329px;">fakturace</span>
<span class="t" style="left:207.95px;top:446.00px;font-size:13.5px;letter-spacing:0.016px;">doba plnění není stanovena, bude dílčím hodnotícím kritériem</span>
<span class="t" style="left:207.95px;top:471.00px;font-size:13.5px;letter-spacing:0.071px;">doba záruky není stanovena, bude dílčím hodnotícím kritériem</span>
<span class="t" style="left:208.95px;top:496.00px;font-size:13.5px;letter-spacing:-0.036px;">jiné</span>
<span class="t" style="left:678.90px;top:422.00px;font-size:13.5px;letter-spacing:-0.028px;">měsíční dle skutečnosti</span>
<span class="t" style="left:678.90px;top:447.00px;font-size:13.5px;letter-spacing:0.360px;">31.12.2024</span>
<span class="t" style="left:678.90px;top:472.00px;font-size:13.5px;letter-spacing:-0.059px;">24 měsíců</span>
<span class="t" style="left:63.80px;top:533.00px;font-size:13.5px;letter-spacing:-0.133px;color:#6d6d6d;">Rozdělení na části</span>
<span class="t" style="left:65.20px;top:571.00px;font-size:13.5px;letter-spacing:-0.019px;">Smlouva</span>
<span class="t" style="left:228.45px;top:572.00px;font-size:13.5px;letter-spacing:-0.159px;">Servisní smlouva</span>
<span class="t" style="left:38.70px;top:743.00px;font-size:13.5px;letter-spacing:-0.087px;">Specifika zadání veřejné zakázky - veřejná zakázka je specifikována dle následující specifikace</span>
<span class="t" style="left:77.10px;top:771.00px;font-size:13.5px;letter-spacing:0.235px;">parametrů, vyjadřujících požadavky na výkon nebo funkci, popisu účelu nebo potřeb, které mají být naplněny</span>
<span class="t" style="left:77.10px;top:796.00px;font-size:13.5px;letter-spacing:0.278px;">odkazu na normy nebo technické dokumenty</span>
<span class="t" style="left:77.10px;top:821.00px;font-size:13.5px;letter-spacing:0.080px;">odkazu na štítky</span>
<span class="t" style="left:77.10px;top:846.00px;font-size:13.5px;letter-spacing:0.256px;">technické podmínky jsou vymezeny projektovou dokumentací a výkazem výměr, které tvoří přílohu zadávací dokumentace</span>
<span class="t" style="left:77.10px;top:871.00px;font-size:13.5px;letter-spacing:0.041px;">součástí zadávacích podmínek je technická specifikace dodávek / služeb, které jsou předmětem plnění veřejné zakázky</span>
<span class="t" style="left:76.60px;top:921.00px;font-size:13.5px;letter-spacing:-0.073px;">Další specifika veřejné zakázky mající vliv na její plnění</span>
</body></html>
